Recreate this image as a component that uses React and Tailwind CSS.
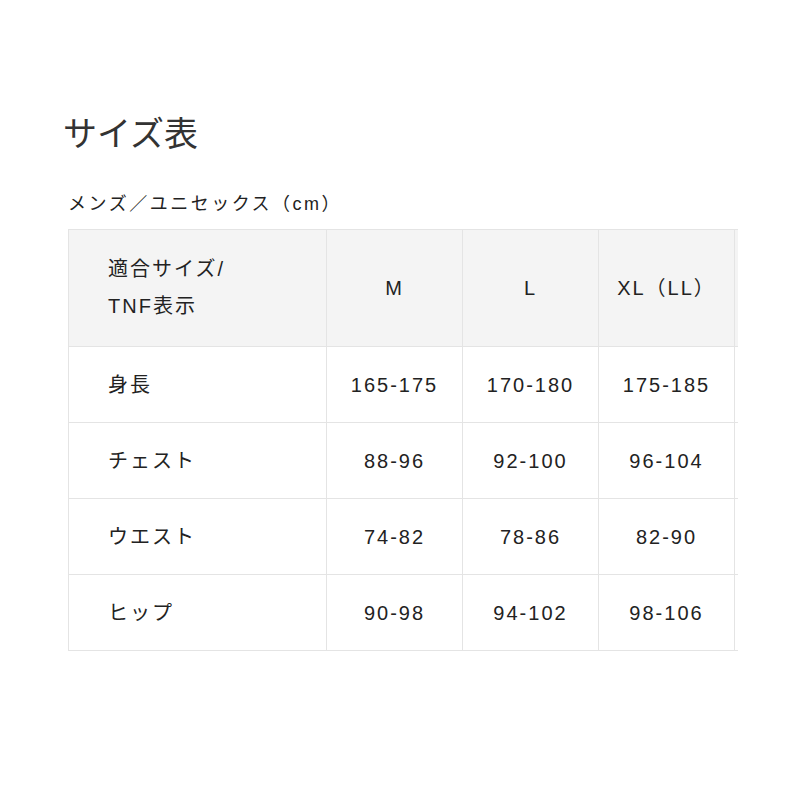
const sizes = ["M", "L", "XL（LL）"];

const rows = [
  { label: "身長", values: ["165-175", "170-180", "175-185"] },
  { label: "チェスト", values: ["88-96", "92-100", "96-104"] },
  { label: "ウエスト", values: ["74-82", "78-86", "82-90"] },
  { label: "ヒップ", values: ["90-98", "94-102", "98-106"] },
];

const font = {
  fontFamily: '"Liberation Sans", "Noto Sans CJK JP", sans-serif',
};

export default function App() {
  return (
    <div className="w-[800px] h-[800px] bg-white text-[#222]" style={font}>
      <div className="pt-[112px] pl-[63px]">
        <h1 className="text-[34px] leading-[44px] text-[#333]">サイズ表</h1>
        <p className="mt-[36px] pl-[5px] text-[18px] leading-[24px] tracking-[2.5px]">
          メンズ／ユニセックス（cm）
        </p>
      </div>

      {/* table; last column is cut off at the edge of its scroll area */}
      <div className="ml-[68px] mt-[13px] grid grid-cols-[258px_136px_136px_136px_3px] w-max border-t border-l border-[#e4e4e4] text-[20px] tracking-[2px]">
        <div className="h-[117px] bg-[#f4f4f4] border-r border-b border-[#e4e4e4] pl-[39px] flex flex-col justify-center leading-[37px]">
          <span>適合サイズ/</span>
          <span>TNF表示</span>
        </div>
        {sizes.map((s) => (
          <div
            key={s}
            className="h-[117px] bg-[#f4f4f4] border-r border-b border-[#e4e4e4] flex items-center justify-center"
          >
            {s}
          </div>
        ))}
        <div className="h-[117px] bg-[#f4f4f4] border-b border-[#e4e4e4]" />

        {rows.map((r) => (
          <Row key={r.label} row={r} />
        ))}
      </div>
    </div>
  );
}

function Row({ row }) {
  return (
    <>
      <div className="h-[76px] border-r border-b border-[#e4e4e4] pl-[39px] flex items-center">
        {row.label}
      </div>
      {row.values.map((v, i) => (
        <div
          key={i}
          className="h-[76px] border-r border-b border-[#e4e4e4] flex items-center justify-center"
        >
          {v}
        </div>
      ))}
      <div className="h-[76px] border-b border-[#e4e4e4]" />
    </>
  );
}
